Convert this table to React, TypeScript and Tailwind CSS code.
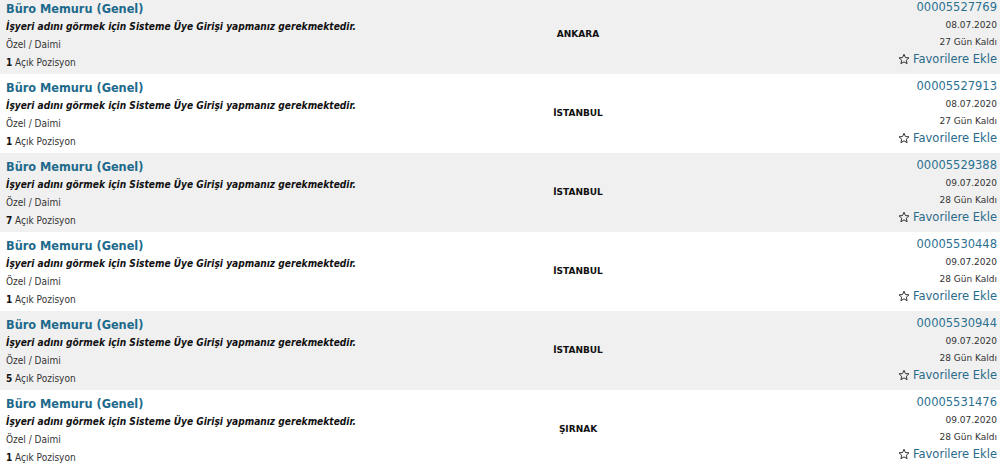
import React from "react"

type Ilan = {
  sehir: string
  no: string
  tarih: string
  kalan: string
  pozisyon: number
}

const ilanlar: Ilan[] = [
  { sehir: "ANKARA", no: "00005527769", tarih: "08.07.2020", kalan: "27 Gün Kaldı", pozisyon: 1 },
  { sehir: "İSTANBUL", no: "00005527913", tarih: "08.07.2020", kalan: "27 Gün Kaldı", pozisyon: 1 },
  { sehir: "İSTANBUL", no: "00005529388", tarih: "09.07.2020", kalan: "28 Gün Kaldı", pozisyon: 7 },
  { sehir: "İSTANBUL", no: "00005530448", tarih: "09.07.2020", kalan: "28 Gün Kaldı", pozisyon: 1 },
  { sehir: "İSTANBUL", no: "00005530944", tarih: "09.07.2020", kalan: "28 Gün Kaldı", pozisyon: 5 },
  { sehir: "ŞIRNAK", no: "00005531476", tarih: "09.07.2020", kalan: "28 Gün Kaldı", pozisyon: 1 },
]

function StarIcon() {
  return (
    <svg width="12" height="12" viewBox="0 0 24 24" className="mr-[3px] mb-[1px]">
      <path
        d="M12 2.5l2.9 6.6 7.1.6-5.4 4.7 1.6 7-6.2-3.7-6.2 3.7 1.6-7L2 9.7l7.1-.6z"
        fill="none"
        stroke="#333"
        strokeWidth="2"
        strokeLinejoin="round"
      />
    </svg>
  )
}

function IlanSatiri({ ilan, gri }: { ilan: Ilan; gri: boolean }) {
  return (
    <div className={`grid grid-cols-[503px_150px_1fr] h-[79px] ${gri ? "bg-[#f0f0f0]" : "bg-white"}`}>
      <div className="pl-[6px] pt-[4px] text-[#222] font-['DejaVu_Sans_Condensed','DejaVu_Sans',sans-serif]">
        <div className="text-[12.6px] leading-[19px] font-bold text-[#1d6a8c]">Büro Memuru (Genel)</div>
        <div className="text-[10.1px] leading-[18px] font-bold italic text-[#111]">
          İşyeri adını görmek için Sisteme Üye Girişi yapmanız gerekmektedir.
        </div>
        <div className="text-[10px] leading-[18px] text-[#333]">Özel / Daimi</div>
        <div className="text-[10px] leading-[18px] text-[#333]">
          <span className="font-bold text-[#111]">{ilan.pozisyon}</span> Açık Pozisyon
        </div>
      </div>
      <div className="flex items-center justify-center text-[9px] font-bold text-[#111]">{ilan.sehir}</div>
      <div className="pr-[3px] pt-[3px] text-right">
        <div className="text-[11.5px] leading-[18px] text-[#2c7091]">{ilan.no}</div>
        <div className="text-[9px] leading-[18px] text-[#333]">{ilan.tarih}</div>
        <div className="text-[9px] leading-[17px] text-[#333]">{ilan.kalan}</div>
        <div className="flex items-center justify-end text-[11.5px] leading-[16px] text-[#2a6a8a]">
          <StarIcon />
          Favorilere Ekle
        </div>
      </div>
    </div>
  )
}

export default function App() {
  return (
    <div className="w-[1000px] h-[464px] overflow-hidden bg-white font-['DejaVu_Sans',Verdana,sans-serif]">
      <div className="border-t border-[#d6d6d6]">
        <div className="-mt-[6px]">
          {ilanlar.map((ilan, i) => (
            <IlanSatiri key={ilan.no} ilan={ilan} gri={i % 2 === 0} />
          ))}
        </div>
      </div>
    </div>
  )
}
